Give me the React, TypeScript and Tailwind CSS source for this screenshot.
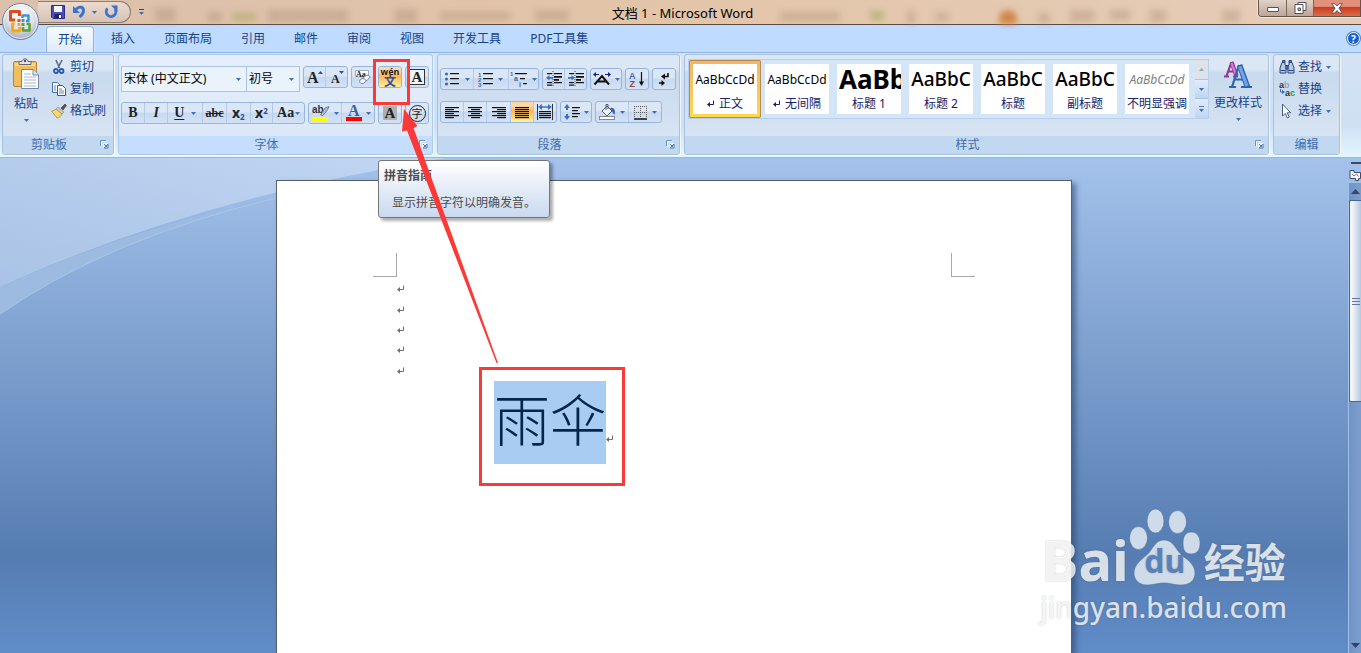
import React from "react";

type Kids = { children?: React.ReactNode };

function Caret({ className = "" }: { className?: string }) {
  return (
    <svg width="5" height="3" viewBox="0 0 5 3" className={"shrink-0 " + className} aria-hidden="true">
      <path d="M0 0H5L2.5 3Z" fill="#3f70b5" />
    </svg>
  );
}

function ReturnMark({ color = "#6e6e6e" }: { color?: string }) {
  return (
    <svg width="8" height="8" viewBox="0 0 8 8" className="shrink-0" aria-hidden="true">
      <path d="M6.5 0.5V4.5H2" stroke={color} strokeWidth="1" fill="none" />
      <path d="M0 4.5L3 2V7Z" fill={color} />
    </svg>
  );
}

function Group({
  label,
  width,
  launcher = true,
  active = false,
  children,
}: Kids & { label: string; width: string; launcher?: boolean; active?: boolean }) {
  return (
    <section
      aria-label={label}
      className={
        "flex flex-col overflow-hidden rounded-[3px] border shadow-[1px_1px_0_#ffffffb0] " +
        width +
        (active
          ? " border-[#a9c8ec] bg-linear-to-b from-[#e6effb] to-[#dae6f6]"
          : " border-[#a7c1df] bg-linear-to-b from-[#dce7f5] from-14% via-[#c9daee] via-18% to-[#dae6f4]")
      }
    >
      <div className="min-h-0 flex-1">{children}</div>
      <div
        className={
          "flex h-[18px] shrink-0 items-center text-xs leading-[18px] text-[#3f6cad] " +
          (active ? "bg-[#c5deff]" : "bg-[#c1d8f0]")
        }
      >
        <h2 className="flex-1 text-center">{label}</h2>
        {launcher && (
          <button aria-label={label + "选项"} className="flex h-full w-[18px] items-start justify-center pt-1">
            <svg width="9" height="9" viewBox="0 0 9 9">
              <path d="M0.5 6V0.5H6" stroke="#6a92c4" fill="none" />
              <path d="M1.5 6.5V1.5H6.5" stroke="#fff" fill="none" opacity=".8" />
              <path d="M3 3H8V8H3Z" fill="#fff" opacity=".7" />
              <path d="M4 4L7 7M8 4V8H4Z" stroke="#5279ad" fill="none" />
            </svg>
          </button>
        )}
      </div>
    </section>
  );
}

function BtnGroup({ width, children }: Kids & { width: string }) {
  return (
    <div
      className={
        "flex h-[22px] shrink-0 divide-x divide-[#b3cbe8] overflow-hidden rounded-[3px] border border-[#96b6dd] bg-linear-to-b from-[#dbe7f6] from-45% via-[#c7d9f0] via-50% to-[#d3e2f6] " +
        width
      }
    >
      {children}
    </div>
  );
}

function Tool({
  label,
  drop = false,
  hot = false,
  grow = "flex-1",
  children,
}: Kids & { label: string; drop?: boolean; hot?: boolean; grow?: string }) {
  return (
    <button
      aria-label={label}
      className={
        "flex h-full min-w-0 items-center justify-center gap-1 " +
        grow +
        (hot ? " bg-linear-to-b from-[#fbd8a8] from-20% via-[#ffb64f] via-45% to-[#fff09a]" : "")
      }
    >
      {children}
      {drop && <Caret />}
    </button>
  );
}

function Glyph({ className = "", children }: Kids & { className?: string }) {
  return (
    <span className={"font-['Liberation_Serif','Noto_Sans_CJK_SC',serif] font-bold leading-none text-[#222] " + className}>
      {children}
    </span>
  );
}

function Lines({ rows, color = "#111" }: { rows: [number, number, number][]; color?: string }) {
  return (
    <>
      {rows.map(([x, y, w]) => (
        <rect key={x + "-" + y} x={x} y={y} width={w} height="1.2" fill={color} />
      ))}
    </>
  );
}

function Icon({ w = 16, h = 16, children }: Kids & { w?: number; h?: number }) {
  return (
    <svg width={w} height={h} viewBox={`0 0 ${w} ${h}`} className="shrink-0 overflow-visible" aria-hidden="true">
      {children}
    </svg>
  );
}

function AlignIcon({ kind }: { kind: "left" | "center" | "right" | "full" }) {
  const short = 9;
  const x = kind === "center" ? 3 : kind === "right" ? 5 : 0;
  const rows: [number, number, number][] = [0, 1, 2, 3, 4, 5].map((i) =>
    i % 2 === 0 || kind === "full" ? [0, 1 + i * 2, 14] : [x, 1 + i * 2, short]
  );
  return (
    <Icon w={14} h={13}>
      <Lines rows={rows} />
    </Icon>
  );
}

function Combo({ label, value, width }: { label: string; value: string; width: string }) {
  return (
    <label className={"relative flex h-[26px] shrink-0 items-center border border-[#abc5e6] bg-[#eaf2fb] " + width}>
      <span className="sr-only">{label}</span>
      <select className="h-[24px] w-full appearance-none bg-transparent pl-[2px] text-xs leading-[18px] text-black">
        <option>{value}</option>
      </select>
      <Caret className="pointer-events-none absolute right-[5px]" />
    </label>
  );
}

function TitleBar() {
  return (
    <header className="relative flex h-[25px] shrink-0 items-start border-b border-[#5d4a3d] bg-linear-to-r from-[#dcc0ab] via-[#e3c5a9] to-[#e6cdb9]">
      <svg className="absolute inset-0 h-full w-full blur-[3px]" aria-hidden="true">
        <g fill="#a98b73" opacity=".38">
          <rect x="155" y="8" width="20" height="14" />
          <rect x="208" y="12" width="14" height="10" />
          <rect x="268" y="10" width="80" height="12" />
          <rect x="395" y="9" width="22" height="14" />
          <rect x="440" y="12" width="70" height="8" />
          <rect x="535" y="10" width="34" height="11" />
          <rect x="780" y="12" width="60" height="9" />
          <rect x="907" y="11" width="8" height="12" />
          <rect x="935" y="13" width="14" height="8" />
          <rect x="1038" y="13" width="12" height="10" />
          <rect x="1070" y="10" width="24" height="12" />
          <rect x="1110" y="10" width="20" height="10" />
          <rect x="1150" y="10" width="16" height="12" />
          <rect x="1222" y="10" width="18" height="12" />
        </g>
        <circle cx="1008" cy="19" r="9" fill="#d08445" />
        <rect x="232" y="13" width="24" height="8" fill="#a9a860" opacity=".6" />
        <rect x="870" y="11" width="14" height="9" fill="#a9a860" opacity=".6" />
      </svg>
      <div className="relative ml-[38px] mt-px flex h-[22px] w-[93px] items-center rounded-r-full border border-l-0 border-[#8d7c71] bg-linear-to-b from-[#ebdace] to-[#d6c3b8] pl-[12px]">
        <button aria-label="保存">
          <Icon w={16} h={16}>
            <path d="M1.5 1.5H14.5V14.5H3L1.5 13Z" fill="#4b4db8" stroke="#2a2c86" />
            <rect x="4" y="2" width="8" height="6" fill="#f4f6ff" />
            <rect x="4.5" y="10" width="7" height="4.5" fill="#20226c" />
            <rect x="9" y="11" width="2" height="3" fill="#fff" />
          </Icon>
        </button>
        <button aria-label="撤消" className="ml-[6px] flex items-center gap-1">
          <Icon w={16} h={16}>
            <path d="M4 5.500C6.500 2 12 2.500 11.500 7C11.200 9.500 9.500 11.500 7.500 13" stroke="#3a72d2" strokeWidth="2.800" fill="none" />
            <path d="M1 2V9H8Z" fill="#3a72d2" />
          </Icon>
          <Caret />
        </button>
        <button aria-label="重复" className="ml-[7px]">
          <Icon w={16} h={16}>
            <path d="M3.500 4.500A4.800 4.800 0 1 0 11 5" stroke="#3a72d2" strokeWidth="2.800" fill="none" />
            <path d="M7 1.500H13.500V8Z" fill="#3a72d2" />
          </Icon>
        </button>
      </div>
      <button aria-label="自定义快速访问工具栏" className="relative ml-2 mt-[9px] flex flex-col items-center gap-[2px]">
        <span className="h-px w-[5px] bg-[#2b4a7c]" />
        <Caret />
      </button>
      <h1 className="absolute inset-x-0 top-[4px] text-center text-[13px] leading-[18px] text-black">
        <span className="pl-1">文档 1 - Microsoft Word</span>
      </h1>
      <div className="relative ml-auto flex h-[17px] overflow-hidden rounded-bl-[4px] border border-t-0 border-[#65544b] shadow-[0_0_0_1px_#f3e4d9]">
        <button aria-label="最小化" className="flex w-[28px] items-center justify-center border-r border-[#76655b] bg-linear-to-b from-[#e2d3c8] to-[#bca597]">
          <span className="mt-0.5 h-[5px] w-[12px] rounded-[1px] border border-[#53535c] bg-white" />
        </button>
        <button aria-label="还原" className="flex w-[27px] items-center justify-center border-r border-[#76655b] bg-linear-to-b from-[#e2d3c8] to-[#bca597]">
          <Icon w={13} h={12}>
            <path d="M4 0.5H12V8.5H4Z" fill="#fff" stroke="#53535c" />
            <path d="M1 2.5H9V11.5H1Z" fill="#fff" stroke="#53535c" />
            <path d="M4 6H6.5V8.5H4Z" fill="#c9b5a8" stroke="#53535c" />
          </Icon>
        </button>
        <button aria-label="关闭" className="flex w-[46px] items-center justify-center bg-linear-to-b from-[#e2907c] from-40% via-[#c93a1d] via-45% to-[#dd6a4c]">
          <Icon w={12} h={11}>
            <path d="M0.7 0.7H4L6 3L8 0.7H11.3L8 5.2L11.3 10H8L6 7.5L4 10H0.7L4 5.2Z" fill="#fff" stroke="#5b4a52" strokeWidth=".9" />
          </Icon>
        </button>
      </div>
      <button aria-label="Office 按钮" className="absolute left-[1px] top-[2px] z-20 rounded-full">
        <svg width="40" height="40" viewBox="0 0 40 40">
          <defs>
            <radialGradient id="orb" cx=".5" cy=".3" r=".75">
              <stop offset="0" stopColor="#fff" />
              <stop offset=".55" stopColor="#dde1e8" />
              <stop offset="1" stopColor="#93a0b5" />
            </radialGradient>
          </defs>
          <circle cx="19.5" cy="19.5" r="18" fill="url(#orb)" stroke="#6f7f9b" />
          <circle cx="19.5" cy="19.5" r="16.8" fill="none" stroke="#fff" opacity=".7" />
          <g fill="none" strokeLinejoin="round">
            <path d="M18.500 14V9.500H9.500V18H14" stroke="#dc4e18" strokeWidth="3" />
            <path d="M21.500 16V13.500H27.500V19H25" stroke="#3d93d8" strokeWidth="2.400" />
            <path d="M13.500 22H11.500V29H18.500V25" stroke="#f6a719" strokeWidth="2.800" />
            <path d="M22 25V28.500H28.500V22H25.500" stroke="#5ea03a" strokeWidth="2.600" />
          </g>
          <g>
            <rect x="16.500" y="17" width="3" height="3" fill="#e0501c" />
            <rect x="20.500" y="17" width="3" height="3" fill="#3d93d8" />
            <rect x="16.500" y="21" width="3" height="3" fill="#f6a719" />
            <rect x="20.500" y="21" width="3" height="3" fill="#5ea03a" />
          </g>
        </svg>
      </button>
    </header>
  );
}

const TABS = ["插入", "页面布局", "引用", "邮件", "审阅", "视图", "开发工具", "PDF工具集"];

function TabBar() {
  return (
    <nav className="flex h-[27px] shrink-0 items-end bg-[#bfdbff] pl-[46px] text-xs text-[#15428b]">
      <div className="flex h-[26px] items-stretch gap-[5px]">
        <button aria-current="page" className="rounded-t-[4px] border border-b-0 border-[#8eb2e0] bg-linear-to-b from-[#f8fbff] to-[#dfebf9] px-[11px] shadow-[0_0_2px_#fff]">
          开始
        </button>
        {TABS.map((t) => (
          <button key={t} className="px-3">
            {t}
          </button>
        ))}
      </div>
      <button aria-label="帮助" className="mb-[7px] ml-auto mr-px flex h-[13px] w-[13px] items-center justify-center rounded-full border border-white bg-[#1b5fd0] text-[10px] font-bold leading-none text-white shadow-[0_0_0_1px_#5a83bd]">
        ?
      </button>
    </nav>
  );
}

function SmallAction({ label, drop = false, children }: Kids & { label: string; drop?: boolean }) {
  return (
    <button className="flex h-[22px] items-center gap-[3px] text-xs text-[#15428b]">
      {children}
      <span>{label}</span>
      {drop && <Caret className="ml-px" />}
    </button>
  );
}

function Clipboard() {
  return (
    <Group label="剪贴板" width="w-[112px] shrink-0">
      <div className="flex">
        <button className="flex w-[46px] flex-col items-center pt-[3px] text-xs text-[#15428b]">
          <svg width="28" height="32" viewBox="0 0 28 32">
            <rect x="1.500" y="3.500" width="23" height="25" rx="1.500" fill="#f2bd5c" stroke="#b98530" />
            <path d="M3 5H23V8H3Z" fill="#f9d78f" />
            <path d="M7 6.500V3.500H10C10 0 16 0 16 3.500H19V6.500Z" fill="#e4e4e4" stroke="#666" />
            <circle cx="13" cy="3" r="1.200" fill="#555" />
            <path d="M9.500 11.500H21L26.500 17V30.500H9.500Z" fill="#fff" stroke="#7289ab" />
            <path d="M21 11.500V17H26.500" fill="#d6e2f3" stroke="#7289ab" />
            <path d="M12 16H19M12 19H24M12 22H24M12 25H24M12 28H24" stroke="#a7b6cc" />
          </svg>
          <span className="mt-[5px] leading-[18px]">粘贴</span>
          <Caret className="mt-[6px]" />
        </button>
        <div className="flex flex-col pl-[2px] pt-[1px]">
          <SmallAction label="剪切">
            <Icon>
              <path d="M5 1L8.500 9M11 1L7 9" stroke="#5b6d88" strokeWidth="1.600" fill="none" />
              <circle cx="5" cy="12" r="2" fill="none" stroke="#2857b4" strokeWidth="1.800" />
              <circle cx="10.500" cy="12" r="2" fill="none" stroke="#2857b4" strokeWidth="1.800" />
            </Icon>
          </SmallAction>
          <SmallAction label="复制">
            <Icon>
              <path d="M1.500 1.500H6.500L9.500 4.500V11.500H1.500Z" fill="#fff" stroke="#4a6fae" />
              <path d="M6.500 4.500H11.500L14.500 7.500V14.500H6.500Z" fill="#fff" stroke="#2f58a4" />
              <path d="M3 5H5M3 7H5M3 9H5M8 8H11M8 10H13M8 12H13" stroke="#5d86c8" />
            </Icon>
          </SmallAction>
          <SmallAction label="格式刷">
            <Icon>
              <path d="M10 5L14 1L15.500 2.500L12 7Z" fill="#5b5347" stroke="#3c3730" strokeWidth=".6" />
              <path d="M7 4L13 9L11 11L5 6Z" fill="#cfcfd4" stroke="#777" strokeWidth=".6" />
              <path d="M5 6L11 11C10 13 8 15 6 15L0.500 8C2 8 4 7 5 6Z" fill="#f5d777" stroke="#b48a2c" strokeWidth=".8" />
            </Icon>
          </SmallAction>
        </div>
      </div>
    </Group>
  );
}

function FontGroup() {
  return (
    <Group label="字体" width="w-[315px] shrink-0" active>
      <div className="flex flex-col gap-[10px] pl-[2px] pt-[11px]">
        <div className="flex items-start gap-[3px]">
          <div className="flex">
            <Combo label="字体名称" value="宋体 (中文正文)" width="w-[126px]" />
            <div className="-ml-px">
              <Combo label="字号" value="初号" width="w-[54px]" />
            </div>
          </div>
          <BtnGroup width="w-[45px]">
            <Tool label="增大字体">
              <Icon w={16} h={16}>
                <text x="0" y="14" fontSize="16" fontWeight="bold" fontFamily="Liberation Serif" fill="#222">A</text>
                <path d="M11 5L13.500 2L16 5Z" fill="#2c4fa8" />
              </Icon>
            </Tool>
            <Tool label="缩小字体">
              <Icon w={16} h={16}>
                <text x="2" y="14" fontSize="12" fontWeight="bold" fontFamily="Liberation Serif" fill="#222">A</text>
                <path d="M10 2H15L12.500 5Z" fill="#2c4fa8" />
              </Icon>
            </Tool>
          </BtnGroup>
          <BtnGroup width="w-[24px]">
            <Tool label="清除格式">
              <Icon w={18} h={18}>
                <path d="M1.500 2.500H14.500V8H1.500Z" fill="#fff" stroke="#8c9bb5" strokeWidth=".8" />
                <text x="2" y="8.500" fontSize="8" fontWeight="bold" fontFamily="Liberation Serif" fill="#222">Aa</text>
                <path d="M6 12L12 7.500C14 6.500 17 8 15.500 10L10 15C7.500 16.500 4.500 14.500 6 12Z" fill="#f4f6fb" stroke="#6f83ab" />
                <path d="M8.500 10.500C11 10.500 12 12 12 13" fill="none" stroke="#6f83ab" />
              </Icon>
            </Tool>
          </BtnGroup>
          <BtnGroup width="w-[24px]">
            <Tool label="拼音指南" hot>
              <span className="flex flex-col items-center">
                <span className="text-[9px] font-bold leading-[8px] text-[#222]">wén</span>
                <span className="text-[12px] font-bold leading-[11px] text-[#2a50a8]">文</span>
              </span>
            </Tool>
          </BtnGroup>
          <BtnGroup width="w-[24px]">
            <Tool label="字符边框">
              <Glyph className="flex h-[16px] w-[16px] items-center justify-center border border-[#333] bg-[#eef4fc] text-[15px]">A</Glyph>
            </Tool>
          </BtnGroup>
        </div>
        <div className="flex items-start gap-[3px]">
          <BtnGroup width="w-[184px]">
            <Tool label="加粗" grow="w-[23px]"><Glyph className="text-sm">B</Glyph></Tool>
            <Tool label="倾斜" grow="w-[24px]"><Glyph className="text-sm italic">I</Glyph></Tool>
            <Tool label="下划线" drop grow="w-[35px]"><Glyph className="mr-[3px] text-sm underline underline-offset-2">U</Glyph></Tool>
            <Tool label="删除线" grow="w-[24px]"><Glyph className="text-xs line-through">abc</Glyph></Tool>
            <Tool label="下标" grow="w-[24px]">
              <span className="text-sm font-bold leading-none text-[#222]">x<sub className="text-[8px] text-[#2c4fa8]">2</sub></span>
            </Tool>
            <Tool label="上标" grow="w-[23px]">
              <span className="text-sm font-bold leading-none text-[#222]">x<sup className="text-[8px] text-[#2c4fa8]">2</sup></span>
            </Tool>
            <Tool label="更改大小写" grow="w-[31px]">
              <Glyph className="-mr-[3px] text-sm">Aa</Glyph>
              <Caret />
            </Tool>
          </BtnGroup>
          <BtnGroup width="w-[67px]">
            <Tool label="突出显示" drop>
              <Icon w={18} h={18}>
                <text x="0" y="9" fontSize="10" fontWeight="bold" fontFamily="Liberation Sans" fill="#333">ab</text>
                <path d="M8.500 11L13 4L17 2.500L15.500 6L11 11.500Z" fill="#aebfda" stroke="#5a6c8c" strokeWidth=".8" />
                <rect x="0" y="13" width="16" height="4" fill="#ffff00" />
              </Icon>
            </Tool>
            <Tool label="字体颜色" drop>
              <Icon w={16} h={18}>
                <text x="2" y="12" fontSize="16" fontWeight="bold" fontFamily="Liberation Serif" fill="#3563a8">A</text>
                <rect x="0" y="13" width="16" height="4" fill="#ff0000" />
              </Icon>
            </Tool>
          </BtnGroup>
          <BtnGroup width="w-[24px]">
            <Tool label="字符底纹">
              <Glyph className="flex h-[14px] w-[14px] items-center justify-center bg-[#b0b0b0] text-[15px]">A</Glyph>
            </Tool>
          </BtnGroup>
          <BtnGroup width="w-[24px]">
            <Tool label="带圈字符">
              <span className="flex h-[17px] w-[17px] items-center justify-center rounded-full border border-[#222] text-[11px] leading-none text-[#222]">字</span>
            </Tool>
          </BtnGroup>
        </div>
      </div>
    </Group>
  );
}

function ParagraphGroup() {
  return (
    <Group label="段落" width="w-[243px] shrink-0">
      <div className="flex flex-col gap-[11px] pl-[2px] pt-[13px]">
        <div className="flex gap-[3px]">
          <BtnGroup width="w-[99px]">
            <Tool label="项目符号" drop grow="w-[34px]">
              <Icon w={16}>
                {[3, 8, 13].map((y) => <circle key={y} cx="1.500" cy={y} r="1.500" fill="#3c63ae" />)}
                <Lines rows={[[5, 2, 9], [5, 7, 9], [5, 12, 9]]} />
              </Icon>
            </Tool>
            <Tool label="编号" drop grow="w-[35px]">
              <Icon w={16}>
                {[1, 2, 3].map((n) => (
                  <text key={n} x="0" y={n * 5 + 0.5} fontSize="6" fontWeight="bold" fontFamily="Liberation Sans" fill="#3c63ae">{n}</text>
                ))}
                <Lines rows={[[5, 2, 10], [5, 7, 10], [5, 12, 10]]} />
              </Icon>
            </Tool>
            <Tool label="多级列表" grow="w-[30px]">
              <Icon w={18}>
                <text x="0" y="5" fontSize="6" fontWeight="bold" fontFamily="Liberation Sans" fill="#3c63ae">1</text>
                <text x="4" y="10" fontSize="7" fontWeight="bold" fontFamily="Liberation Sans" fill="#3c63ae">a</text>
                <text x="9" y="15.500" fontSize="7" fontWeight="bold" fontFamily="Liberation Sans" fill="#3c63ae">i</text>
                <Lines rows={[[5, 2, 12], [10, 7, 5], [13, 12, 4]]} />
              </Icon>
              <Caret />
            </Tool>
          </BtnGroup>
          <BtnGroup width="w-[45px]">
            <Tool label="减少缩进量">
              <Icon>
                <Lines rows={[[1, 2, 5], [8, 2, 8], [8, 5, 8], [8, 5.500, 8], [8, 8, 5], [8, 8.500, 5], [1, 11, 5], [8, 11, 8], [1, 13.500, 5]]} />
                <path d="M0 6.800L3.500 4V6H7V7.800H3.500V9.600Z" fill="#3f6fc4" />
                <path d="M7 0V16" stroke="#444" strokeDasharray="1 1" />
              </Icon>
            </Tool>
            <Tool label="增加缩进量">
              <Icon>
                <Lines rows={[[1, 2, 5], [8, 2, 8], [8, 5, 8], [8, 5.500, 8], [8, 8, 5], [8, 8.500, 5], [1, 11, 5], [8, 11, 8], [1, 13.500, 5]]} />
                <path d="M7 6.800L3.500 4V6H0V7.800H3.500V9.600Z" fill="#3f6fc4" />
                <path d="M7 0V16" stroke="#444" strokeDasharray="1 1" />
              </Icon>
            </Tool>
          </BtnGroup>
          <BtnGroup width="w-[32px]">
            <Tool label="中文版式" grow="w-[30px]">
              <Icon w={18}>
                <path d="M1.500 13.500L9 5L16 13.500M4.500 10.500H13" stroke="#111" strokeWidth="2" fill="none" />
                <path d="M0 3.500L3 1V3H6V4H3V6ZM18 3.500L15 1V3H12V4H15V6Z" fill="#1b1f96" />
              </Icon>
              <Caret />
            </Tool>
          </BtnGroup>
          <BtnGroup width="w-[24px]">
            <Tool label="排序">
              <Icon>
                <text x="0" y="7.500" fontSize="9" fontWeight="bold" fontFamily="Liberation Sans" fill="#4169ae">A</text>
                <text x="0.500" y="16" fontSize="9" fontWeight="bold" fontFamily="Liberation Sans" fill="#9c4141">Z</text>
                <path d="M12.500 1V12" stroke="#111" strokeWidth="1.200" />
                <path d="M10 10.500H15L12.500 15Z" fill="#111" />
              </Icon>
            </Tool>
          </BtnGroup>
          <BtnGroup width="w-[24px]">
            <Tool label="显示编辑标记">
              <Icon w={14} h={14}>
                <path d="M11 1V4.500H6M2 11H6" stroke="#111" strokeWidth="1.600" fill="none" />
                <path d="M4 4.500L8 1.500V7.500ZM8 11L4.500 8V14Z" fill="#111" />
              </Icon>
            </Tool>
          </BtnGroup>
        </div>
        <div className="flex gap-[3px]">
          <BtnGroup width="w-[117px]">
            <Tool label="左对齐"><AlignIcon kind="left" /></Tool>
            <Tool label="居中"><AlignIcon kind="center" /></Tool>
            <Tool label="右对齐"><AlignIcon kind="right" /></Tool>
            <Tool label="两端对齐" hot><AlignIcon kind="full" /></Tool>
            <Tool label="分散对齐">
              <Icon>
                <path d="M0.500 0V16M15.500 0V16" stroke="#333" />
                <path d="M1 3L5 0V2.300H11V0L15 3L11 6V3.700H5V6Z" fill="#3f6fc4" />
                <Lines rows={[[2, 7, 12], [2, 9, 12], [2, 11, 12], [2, 13, 12]]} />
              </Icon>
            </Tool>
          </BtnGroup>
          <BtnGroup width="w-[32px]">
            <Tool label="行距" grow="w-[30px]">
              <Icon w={16}>
                <path d="M3 0L6 4H4V6H2V4H0ZM3 16L6 12H4V10H2V12H0Z" fill="#3f6fc4" />
                <Lines rows={[[8, 3, 8], [8, 6, 6], [8, 9, 8], [8, 12, 6]]} />
              </Icon>
              <Caret />
            </Tool>
          </BtnGroup>
          <BtnGroup width="w-[67px]">
            <Tool label="底纹" drop>
              <Icon w={17}>
                <path d="M3 7L8 2L13 7L8 12Z" fill="#eef2f9" stroke="#4d5f80" />
                <path d="M7 6V0.500H9V5" fill="none" stroke="#4d5f80" />
                <path d="M11 4C15 3 17 6 15.500 11C14 9 13 8 12.500 6Z" fill="#3563b8" />
                <rect x="0.500" y="12.500" width="15" height="3" fill="#fff" stroke="#888" />
              </Icon>
            </Tool>
            <Tool label="边框" drop>
              <Icon w={15} h={15}>
                <path d="M1 1.500H14M1 7.500H14M1.500 1V13M7.500 1V13M13.500 1V13" stroke="#555" strokeDasharray="1 1" />
                <path d="M1 14H14" stroke="#111" strokeWidth="1.500" />
              </Icon>
            </Tool>
          </BtnGroup>
        </div>
      </div>
    </Group>
  );
}

type StyleItem = { name: string; sample: string; look: string; mark?: boolean; on?: boolean };

const STYLES: StyleItem[] = [
  { name: "正文", sample: "AaBbCcDd", look: "justify-center text-xs text-black", mark: true, on: true },
  { name: "无间隔", sample: "AaBbCcDd", look: "justify-center text-xs text-black", mark: true },
  { name: "标题 1", sample: "AaBb", look: "pl-[2px] text-[26px] font-bold text-black" },
  { name: "标题 2", sample: "AaBbC", look: "justify-center text-[19px] font-medium text-black" },
  { name: "标题", sample: "AaBbC", look: "justify-center text-[19px] font-medium text-black" },
  { name: "副标题", sample: "AaBbC", look: "justify-center text-[19px] font-medium text-black" },
  { name: "不明显强调", sample: "AaBbCcDd", look: "justify-center text-xs italic text-[#808080]" },
];

function StylesGroup() {
  return (
    <Group label="样式" width="min-w-0 flex-1">
      <div className="flex gap-[3px] pl-[3px] pt-1">
        <div className="flex h-[60px] shrink-0 gap-[2px] border border-[#b6cfee] bg-[#d5e5f8]">
          <div className="flex">
            {STYLES.map((s) => (
              <button
                key={s.name}
                className={
                  "flex w-[72px] rounded-[2px] p-1 " +
                  (s.on ? "bg-linear-to-b from-[#f3b56b] to-[#ffd94a] shadow-[inset_0_0_0_1px_#b58a4c]" : "")
                }
              >
                <span className="flex h-full w-[64px] flex-col overflow-hidden bg-white">
                  <span className={"flex h-[31px] items-center whitespace-nowrap font-['Noto_Sans',sans-serif] leading-[31px] " + s.look}>
                    {s.sample}
                  </span>
                  <span className="flex items-center justify-center gap-1 whitespace-nowrap text-xs leading-[18px] text-[#15216b]">
                    {s.mark && <ReturnMark color="#15216b" />}
                    {s.name}
                  </span>
                </span>
              </button>
            ))}
          </div>
          <div className="flex w-[13px] flex-col divide-y divide-[#a9c4e6]">
            <button aria-label="上一行" className="flex flex-1 items-center justify-center bg-[#dfe3e8]">
              <Caret className="rotate-180 opacity-50" />
            </button>
            <button aria-label="下一行" className="flex flex-1 items-center justify-center bg-linear-to-b from-[#e2edfb] to-[#bfd5f0]">
              <Caret />
            </button>
            <button aria-label="其他样式" className="flex flex-1 flex-col items-center justify-center gap-[2px] bg-linear-to-b from-[#e2edfb] to-[#bfd5f0]">
              <span className="h-px w-[5px] bg-[#4f7fc0]" />
              <Caret />
            </button>
          </div>
        </div>
        <button className="flex shrink-0 flex-col items-center whitespace-nowrap px-[2px] text-xs text-[#15428b]">
          <svg width="30" height="31" viewBox="0 0 30 31" fill="none">
            <path d="M1 17.500H6M10 17.500H15M3.500 17L8.500 3M5 12.500H12" stroke="#93388f" strokeWidth="2.200" />
            <path d="M8.500 3L13.500 17" stroke="#93388f" strokeWidth="4.200" />
            <path d="M8.500 4L13.200 16.500" stroke="#d67ad0" strokeWidth="2.200" />
            <path d="M6 28H13M18 28H29M9 28L16 6M11 20.500H21" stroke="#2f63b0" strokeWidth="2.200" />
            <path d="M16.500 6L24.500 28" stroke="#2f63b0" strokeWidth="5.600" />
            <path d="M16.800 7.500L24 27" stroke="#6ea6e8" strokeWidth="3.200" />
          </svg>
          <span className="mt-[4px] leading-[18px]">更改样式</span>
          <Caret className="mt-[6px]" />
        </button>
      </div>
    </Group>
  );
}

function EditingGroup() {
  return (
    <Group label="编辑" width="w-[67px] shrink-0" launcher={false}>
      <div className="flex flex-col pl-[5px] pt-[1px]">
        <SmallAction label="查找" drop>
          <Icon>
            <path d="M3 3.500H6V6L7 7V14H1V9ZM10 3.500H13L15 9V14H9V7L10 6Z" fill="#b9c9e0" stroke="#27457c" />
            <path d="M3.500 1.500H6V3.500H3.500ZM10 1.500H12.500V3.500H10ZM7 6.500H9V10H7Z" fill="#5e7db0" stroke="#27457c" />
            <path d="M1.500 11.500H6.500M9.500 11.500H14.500" stroke="#27457c" />
          </Icon>
        </SmallAction>
        <SmallAction label="替换">
          <Icon>
            <text x="0" y="6.500" fontSize="9" fontWeight="bold" fontFamily="Liberation Sans" fill="#333">a<tspan fill="#8fa6c4">b</tspan></text>
            <text x="6" y="15" fontSize="9" fontWeight="bold" fontFamily="Liberation Sans" fill="#333">a<tspan fill="#2c9a3a">c</tspan></text>
            <path d="M1.500 8V11H3" stroke="#3f6fc4" fill="none" />
            <path d="M3 8.800L6 11L3 13.200Z" fill="#3f6fc4" />
          </Icon>
        </SmallAction>
        <SmallAction label="选择" drop>
          <Icon>
            <path d="M3.500 1V13L6.300 10.500L8.300 15L10.200 14L8.200 9.800H11.800Z" fill="#fff" stroke="#4b5f86" />
          </Icon>
        </SmallAction>
      </div>
    </Group>
  );
}

function Ribbon() {
  return (
    <div className="flex h-[106px] shrink-0 gap-1 border-y border-b-[#86c3d6] border-t-[#8db2e3] bg-linear-to-b from-[#d4e3f5] via-[#cfe0f4] via-70% to-[#e4f6ff] pb-[2px] pl-[2px] pr-[21px] pt-px">
      <Clipboard />
      <FontGroup />
      <ParagraphGroup />
      <StylesGroup />
      <EditingGroup />
    </div>
  );
}

function Scrollbar() {
  return (
    <aside className="flex w-[13px] shrink-0 flex-col" aria-label="垂直滚动条">
      <div className="ml-[3px] mt-1 h-[2px] bg-[#3a4a6b]" />
      <button aria-label="标尺" className="mt-[4px] flex h-[15px] items-center">
        <Icon w={13} h={13}>
          <path d="M2 1.500H6V3.500H12.500V9.500H10.500V11.500H7.500V9.500H2Z" fill="#f3f6fc" stroke="#3c4b6d" />
          <path d="M4 5L6 7L8.500 5L10.500 7.500" stroke="#8c6d80" fill="none" />
        </Icon>
      </button>
      <div className="flex min-h-0 flex-1 flex-col border-l border-[#a3c2ea] bg-linear-to-r from-[#6e93c7] to-[#7d9ecb]">
        <button aria-label="向上滚动" className="flex h-[17px] shrink-0 items-center justify-center">
          <svg width="9" height="5" viewBox="0 0 9 5"><path d="M4.500 0L9 5H0Z" fill="#3b4668" /></svg>
        </button>
        <div className="flex h-[43%] flex-col items-center justify-center gap-[2px] rounded-l-[2px] border border-r-0 border-[#4c6694] bg-linear-to-r from-[#f2f5fa] from-20% to-[#b6c8df]">
          {[0, 1, 2].map((i) => <span key={i} className="h-px w-[8px] bg-[#66779a]" />)}
        </div>
        <button aria-label="向下滚动" className="mb-[3px] mt-auto flex h-[10px] items-center justify-center">
          <svg width="9" height="5" viewBox="0 0 9 5"><path d="M0 0H9L4.500 5Z" fill="#33406a" /></svg>
        </button>
      </div>
    </aside>
  );
}

function Watermark() {
  return (
    <div className="absolute bottom-[28px] right-[74px] flex flex-col items-center text-white/80 [text-shadow:0_0_2px_#00000040]">
      <div className="flex h-[80px] items-end">
        <span className="text-[56px] font-bold leading-[60px]">Bai</span>
        <span className="relative mb-[3px] block h-[78px] w-[72px]">
          <svg width="72" height="78" viewBox="0 0 72 78" fill="#d0dbea" stroke="#4f76aa" strokeWidth=".6" className="absolute inset-0">
            <ellipse cx="9.500" cy="30" rx="9" ry="11.500" />
            <ellipse cx="26.500" cy="13" rx="8.500" ry="12" />
            <ellipse cx="48.500" cy="14" rx="9" ry="11.500" />
            <path d="M54 35C54 28 57 24 62 24C69 24 71.500 30 71 37C70.500 43 67 46 62 46C56 46 54 42 54 35Z" />
            <path d="M35 32C42 32 45 37 49 43C54 50 66 54 66 65C66 73 60 77 52 77C45 77 42 75 35 75C28 75 24 77 18 77C10 77 5 72 5 65C5 54 18 49 22 42C26 36 29 32 35 32Z" />
          </svg>
          <span className="absolute inset-x-0 bottom-[9px] text-center text-[32px] font-bold leading-[32px] text-[#5b82b8]">du</span>
        </span>
        <span className="pl-[3px] text-[41px] font-bold leading-[54px]">经验</span>
      </div>
      <span className="text-[28px] font-medium leading-[36px]">jingyan.baidu.com</span>
    </div>
  );
}

function Workspace() {
  return (
    <div className="relative flex min-h-0 flex-1 bg-linear-to-b from-[#a4c2eb] via-[#567db2] via-80% to-[#608cc8]">
      <svg className="absolute left-0 top-0" width="460" height="170" aria-hidden="true">
        <defs>
          <linearGradient id="sheen" x1="0" y1="1" x2="1" y2="0">
            <stop offset="0" stopColor="#a9c3e6" />
            <stop offset="1" stopColor="#c1d6f3" />
          </linearGradient>
        </defs>
        <path d="M0 0H445Q190 42 0 129Z" fill="url(#sheen)" />
        <path d="M0 129Q130 70 276 40Q110 80 0 156Z" fill="#9dbae0" />
        <path d="M0 156Q110 80 276 40" fill="none" stroke="#aac7e8" />
      </svg>
      <main className="relative flex min-w-0 flex-1 justify-center pt-[22px]">
        <article className="w-[796px] border border-b-0 border-[#555f70] bg-white px-[96px] pt-[72px] shadow-[4px_3px_5px_#2b466d90]">
          <div className="flex justify-between">
            <span className="h-[24px] w-[24px] border-b border-r border-[#a8a8a8]" />
            <span className="h-[24px] w-[24px] border-b border-l border-[#a8a8a8]" />
          </div>
          <div className="px-6">
            <div className="flex h-[104px] flex-col pt-[2px]">
              {[0, 1, 2, 3, 4].map((i) => (
                <p key={i} className="flex flex-1 items-center"><ReturnMark /></p>
              ))}
            </div>
            <div className="flex pl-[82px]">
              <p className="-mt-[14px] flex h-[119px] w-[146px] items-start border-[3px] border-[#fb3a38] pl-[12px] pt-[11px]">
                <span className="h-[83px] whitespace-nowrap bg-[#a9cdf2] font-['Liberation_Serif','Noto_Sans_CJK_SC',serif] text-[56px] font-light leading-[83px] text-[#03264c]">
                  雨伞
                </span>
                <span className="pt-[54px]"><ReturnMark /></span>
              </p>
            </div>
          </div>
        </article>
      </main>
      <Scrollbar />
      <Watermark />
    </div>
  );
}

export default function App() {
  return (
    <div className="relative flex h-screen flex-col overflow-hidden font-['Noto_Sans','Noto_Sans_CJK_SC',sans-serif]">
      <TitleBar />
      <TabBar />
      <Ribbon />
      <Workspace />
      <div role="tooltip" className="absolute left-[378px] top-[160px] z-30 w-[172px] rounded-[3px] border border-[#767676] bg-linear-to-b from-white to-[#c9d9ef] px-[5px] pb-[5px] pt-[6px] text-xs text-[#4c4c4c] shadow-[3px_3px_3px_#00000050]">
        <p className="font-bold leading-[18px]">拼音指南</p>
        <p className="mt-[9px] whitespace-nowrap pl-2 leading-[18px]">显示拼音字符以明确发音。</p>
      </div>
      <div className="absolute left-[373px] top-[59px] z-30 h-[46px] w-[37px] border-[3px] border-[#fb3a38]" />
      <svg className="absolute left-[398px] top-[104px] z-40" width="104" height="264" viewBox="398 104 104 264" aria-hidden="true">
        <path d="M404 109L417.500 126L413.500 128L498 363H496.500L407 130.500L402 131.500Z" fill="#fb3a38" />
      </svg>
    </div>
  );
}
